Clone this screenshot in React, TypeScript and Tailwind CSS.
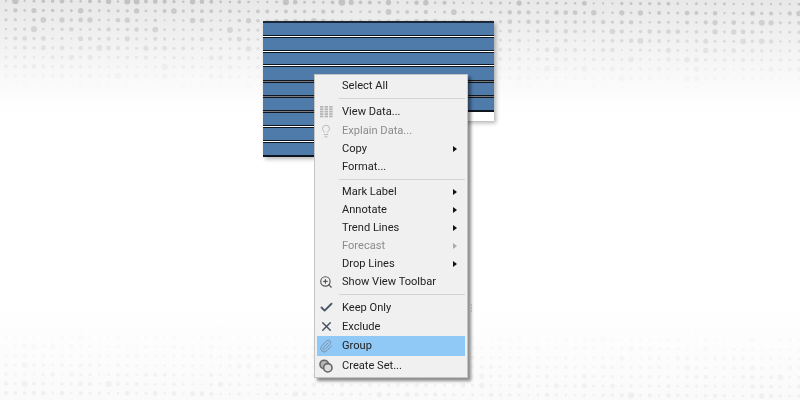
import { Check, Lightbulb, Paperclip, X, ZoomIn } from "lucide-react"
import type { ReactNode } from "react"

// seeded so the dot field comes out the same every run
function rand(n: number) {
  const s = Math.sin(n * 12.9898) * 43758.5453
  return s - Math.floor(s)
}

function DotField() {
  const dots = []
  for (let row = 0; row < 44; row++) {
    for (let col = 0; col < 87; col++) {
      const x = 6 + col * 9.33
      const y = 1 + row * 9.33 + x * 0.004
      const top = Math.pow(Math.max(0, 1 - y / 95), 1.4) * 0.75
      const bottom = Math.max(0, (y - 320) / 80) * 0.16
      const o = Math.max(top, bottom)
      if (o <= 0) continue
      const r = 1 + rand(row * 87 + col) * rand(row * 31 + col * 7 + 3) * 2 + rand(col + row * 5) * 0.5
      dots.push(<circle key={`${row}-${col}`} cx={x} cy={y} r={r} fill="#b4b4b4" opacity={o} />)
    }
  }
  return (
    <svg className="absolute inset-0 blur-[0.7px]" width="800" height="400">
      {dots}
    </svg>
  )
}

function Stripe({ light }: { light?: boolean }) {
  return (
    <div className="flex flex-col shrink-0">
      <div className="h-px bg-[#10161f]" />
      <div className={light ? "h-px bg-white" : "h-px bg-[#77797c]"} />
      <div className="h-px bg-[#10161f]" />
    </div>
  )
}

const rowHeights = ["h-[12px]", "h-[12px]", "h-[11px]", "h-[13px]", "h-[12px]", "h-[12px]", "h-[12px]", "h-[12px]", "h-[12px]"]

function Bars({ count }: { count: number }) {
  return (
    <div className="flex flex-col">
      <div className="h-[2px] bg-[#1c2836]" />
      {rowHeights.slice(0, count).map((h, i) => (
        <div key={i} className="flex flex-col">
          <div className={`${h} bg-[#4f7bab]`} />
          {i < count - 1 && <Stripe light={i < 3 || i > 5} />}
        </div>
      ))}
      <div className="h-[2px] bg-[#10161f]" />
    </div>
  )
}

function GridIcon() {
  return (
    <svg width="13" height="12" viewBox="0 0 13 12" fill="#b4b4b4">
      {[0, 2.4, 4.8, 7.2, 9.6].map((y) => (
        <g key={y}>
          <rect x="0" y={y} width="3.4" height="1.7" />
          <rect x="4.6" y={y} width="3.4" height="1.7" />
          <rect x="9.2" y={y} width="3.4" height="1.7" />
        </g>
      ))}
    </svg>
  )
}

function SetIcon() {
  return (
    <svg width="14" height="14" viewBox="0 0 14 14" fill="none" stroke="#666" strokeWidth="1.6">
      <circle cx="5.2" cy="5.4" r="4.2" fill="#b5b5b5" />
      <circle cx="8.8" cy="8.8" r="4.2" fill="#dcdcdc" />
    </svg>
  )
}

function Item({
  label,
  icon,
  arrow,
  disabled,
  active,
  h = "h-[18px]",
}: {
  label: string
  icon?: ReactNode
  arrow?: boolean
  disabled?: boolean
  active?: boolean
  h?: string
}) {
  return (
    <div className={`${h} flex items-center pr-[8px] ${active ? "bg-[#90c8f6]" : ""} ${disabled ? "text-[#8b8b8b]" : "text-[#222]"}`}>
      <div className="w-[25px] flex justify-center shrink-0 pr-[8px] pl-px">{icon}</div>
      <span className="flex-1 whitespace-nowrap">{label}</span>
      {arrow && (
        <div className={`w-0 h-0 border-y-[3.5px] border-y-transparent border-l-[4px] ${disabled ? "border-l-[#aaa]" : "border-l-[#111]"}`} />
      )}
    </div>
  )
}

function Separator() {
  return <div className="h-px bg-[#d4d4d4] ml-[22px] my-[3px]" />
}

export default function App() {
  return (
    <div className="relative w-[800px] h-[400px] overflow-hidden bg-[linear-gradient(to_bottom,#e8e8e8_0%,#f1f1f1_10%,#f8f8f8_18%,#fefefe_26%,#ffffff_30%,#ffffff_76%,#fafafa_100%)] font-['Roboto',sans-serif]">
      <DotField />

      <div className="relative pt-[21px] pl-[263px] blur-[0.3px]">
        <div className="flex w-[231px] drop-shadow-[2px_2px_2px_rgba(0,0,0,0.3)]">
          <div className="w-[51px]">
            <Bars count={9} />
          </div>
          <div className="w-[180px]">
            <Bars count={6} />
            <div className="h-[9px] bg-white" />
          </div>
        </div>
      </div>

      {/* context menu */}
      <div className="absolute left-[314px] top-[74px] w-[154px] h-[304px] bg-[#f0f0f0] border border-[#c4c4c4] px-[2px] pt-[2px] text-[11.1px] leading-none shadow-[3px_3px_3px_rgba(0,0,0,0.45)] blur-[0.3px]">
        <Item label="Select All" />
        <Separator />
        <Item label="View Data..." h="h-[19px]" icon={<GridIcon />} />
        <Item label="Explain Data..." h="h-[19px]" disabled icon={<Lightbulb size={14} color="#b0b0b0" strokeWidth={1.5} />} />
        <Item label="Copy" arrow />
        <Item label="Format..." />
        <Separator />
        <Item label="Mark Label" arrow />
        <Item label="Annotate" arrow />
        <Item label="Trend Lines" arrow />
        <Item label="Forecast" arrow disabled />
        <Item label="Drop Lines" arrow />
        <Item label="Show View Toolbar" icon={<ZoomIn size={14} color="#555" strokeWidth={2} />} />
        <Separator />
        <Item label="Keep Only" h="h-[19px]" icon={<Check size={15} color="#4a5564" strokeWidth={3} />} />
        <Item label="Exclude" h="h-[19px]" icon={<X size={15} color="#4a5564" strokeWidth={2.4} />} />
        <Item label="Group" h="h-[20px]" active icon={<Paperclip size={14} color="#7a8fa3" strokeWidth={1.7} />} />
        <Item label="Create Set..." h="h-[19px]" icon={<SetIcon />} />

        {/* resize grip on the right edge */}
        <div className="absolute -right-[5px] top-[229px] flex flex-col gap-px">
          <div className="w-[2px] h-[2px] bg-[#b5b5b5]" />
          <div className="w-[2px] h-[2px] bg-[#b5b5b5]" />
          <div className="w-[2px] h-[2px] bg-[#b5b5b5]" />
        </div>
      </div>
    </div>
  )
}
